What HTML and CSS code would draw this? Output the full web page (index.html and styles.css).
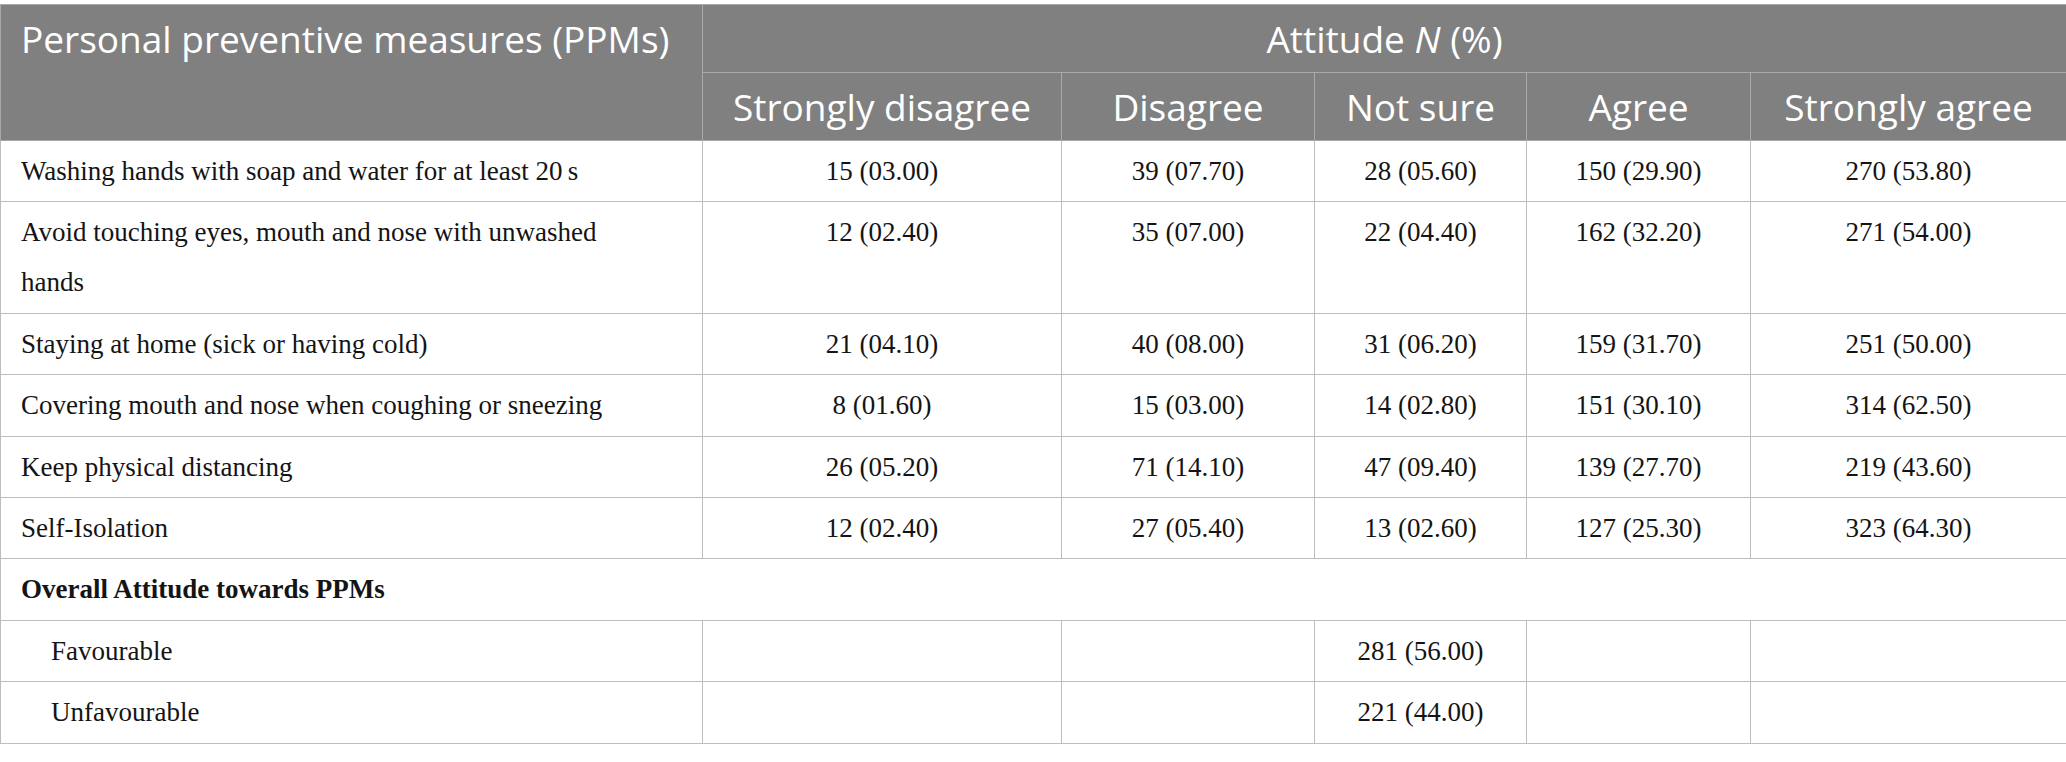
FILE: index.html
```html
<!DOCTYPE html>
<html>
<head>
<meta charset="utf-8">
<link rel="stylesheet" href="styles.css">
</head>
<body>
<table class="data">
  <colgroup>
    <col class="c-label"><col class="c-sd"><col class="c-d"><col class="c-ns"><col class="c-a"><col class="c-sa">
  </colgroup>
  <thead>
    <tr>
      <th rowspan="2" class="h-label">Personal preventive measures (PPMs)</th>
      <th colspan="5" class="h-group">Attitude <i>N</i> (%)</th>
    </tr>
    <tr>
      <th>Strongly disagree</th>
      <th>Disagree</th>
      <th>Not sure</th>
      <th>Agree</th>
      <th>Strongly agree</th>
    </tr>
  </thead>
  <tbody>
    <tr><td class="label">Washing hands with soap and water for at least 20&#8201;s</td><td>15 (03.00)</td><td>39 (07.70)</td><td>28 (05.60)</td><td>150 (29.90)</td><td>270 (53.80)</td></tr>
    <tr><td class="label">Avoid touching eyes, mouth and nose with unwashed hands</td><td class="top">12 (02.40)</td><td class="top">35 (07.00)</td><td class="top">22 (04.40)</td><td class="top">162 (32.20)</td><td class="top">271 (54.00)</td></tr>
    <tr><td class="label">Staying at home (sick or having cold)</td><td>21 (04.10)</td><td>40 (08.00)</td><td>31 (06.20)</td><td>159 (31.70)</td><td>251 (50.00)</td></tr>
    <tr><td class="label">Covering mouth and nose when coughing or sneezing</td><td>8 (01.60)</td><td>15 (03.00)</td><td>14 (02.80)</td><td>151 (30.10)</td><td>314 (62.50)</td></tr>
    <tr><td class="label">Keep physical distancing</td><td>26 (05.20)</td><td>71 (14.10)</td><td>47 (09.40)</td><td>139 (27.70)</td><td>219 (43.60)</td></tr>
    <tr><td class="label">Self-Isolation</td><td>12 (02.40)</td><td>27 (05.40)</td><td>13 (02.60)</td><td>127 (25.30)</td><td>323 (64.30)</td></tr>
    <tr><td class="label section" colspan="6">Overall Attitude towards PPMs</td></tr>
    <tr><td class="label indent">Favourable</td><td></td><td></td><td>281 (56.00)</td><td></td><td></td></tr>
    <tr><td class="label indent">Unfavourable</td><td></td><td></td><td>221 (44.00)</td><td></td><td></td></tr>
  </tbody>
</table>
</body>
</html>
```
FILE: styles.css
```css
html, body {
  margin: 0;
  padding: 0;
  background: #ffffff;
}
body {
  padding-top: 4px;
}
.data {
  width: 2066px;
  border-collapse: collapse;
  table-layout: fixed;
}
.c-label { width: 702px; }
.c-sd { width: 359px; }
.c-d { width: 253px; }
.c-ns { width: 212px; }
.c-a { width: 224px; }
.c-sa { width: 316px; }

.data th {
  background: #7f807f;
  color: #ffffff;
  font-family: "Open Sans", "Noto Sans", sans-serif;
  font-weight: normal;
  font-size: 37px;
  line-height: 56px;
  height: 56px;
  padding: 6px 10px 5px;
  border: 1px solid #a8a9a8;
  text-align: center;
  white-space: nowrap;
}
.data th.h-label {
  text-align: left;
  vertical-align: top;
  padding-left: 20px;
}
.data td {
  font-family: "Liberation Serif", "Times New Roman", serif;
  font-size: 27px;
  line-height: 50px;
  height: 50px;
  padding: 5px 12px 5.4px;
  color: #141414;
  border: 1px solid #bdbdbd;
  text-align: center;
  vertical-align: middle;
}
.data td.top {
  vertical-align: top;
}
.data td.label {
  text-align: left;
  vertical-align: top;
  padding-left: 20px;
  padding-right: 60px;
}
.data td.section {
  font-weight: bold;
}
.data td.indent {
  padding-left: 50px;
}
```
